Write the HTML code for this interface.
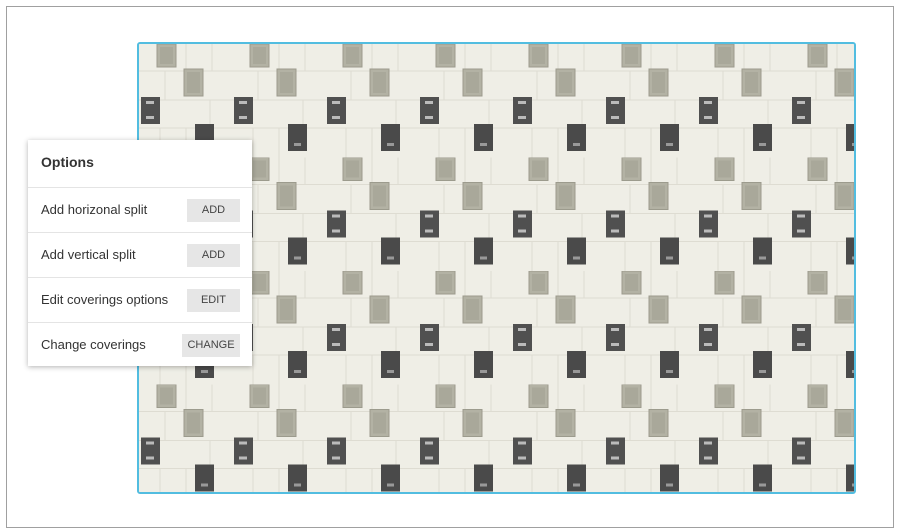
<!DOCTYPE html>
<html><head><style>
body{margin:0;width:899px;height:530px;background:#fff;position:relative;overflow:hidden;font-family:"Liberation Sans",sans-serif}
.outer{position:absolute;left:6px;top:6px;width:886px;height:520px;border:1px solid #a0a0a0}
.floor{position:absolute;left:137px;top:42px;width:715px;height:448px;border:2px solid #52bde0;border-radius:3px;overflow:hidden;background:#efeee6}
.panel{position:absolute;left:28px;top:140px;width:224px;height:226px;background:#fff;box-shadow:0 1px 5px rgba(0,0,0,.3);color:#333}
.h{height:47px;line-height:44px;padding-left:13px;font-weight:bold;font-size:14px;border-bottom:1px solid #e4e4e4}
.r{height:44px;border-bottom:1px solid #e4e4e4;position:relative;font-size:13px;line-height:44px;padding-left:13px}
.r:last-child{border:none}
.b{position:absolute;right:12px;top:11px;height:23px;line-height:23px;background:#e6e6e6;font-size:11px;text-align:center;color:#444;width:53px}
</style></head><body>
<div class="outer"></div>
<div class="floor">
<svg width="715" height="448">
<defs>
<pattern id="p" x="1" y="0" width="93" height="113.5" patternUnits="userSpaceOnUse">
<rect width="93" height="113.5" fill="#efeee6"/>
<path d="M0 27H93M0 56H93M0 84H93M46 0V27M25 27V56M70 56V84M46 84V113.5M20 84V113.5M72 0V27" stroke="#dedcd2" stroke-width="1" fill="none"/>
<rect x="17" y="0" width="19" height="23" fill="#b3b2a4" stroke="#9c9b8d"/>
<rect x="20" y="3" width="13" height="17" fill="#a9a89a"/>
<rect x="44" y="25" width="19" height="27" fill="#b3b2a4" stroke="#9c9b8d"/>
<rect x="47" y="28" width="13" height="21" fill="#a9a89a"/>
<rect x="1" y="53" width="19" height="27" fill="#505050"/>
<rect x="55" y="80" width="19" height="27" fill="#4a4a4a"/>
<rect x="6" y="57" width="8" height="3" fill="#bbb"/><rect x="6" y="72" width="8" height="3" fill="#bbb"/>
<rect x="61" y="99" width="7" height="3" fill="#999"/>
</pattern>
</defs>
<rect width="715" height="448" fill="url(#p)"/>
</svg>
</div>
<div class="panel">
<div class="h">Options</div>
<div class="r">Add horizonal split<div class="b">ADD</div></div>
<div class="r">Add vertical split<div class="b">ADD</div></div>
<div class="r">Edit coverings options<div class="b">EDIT</div></div>
<div class="r">Change coverings<div class="b" style="width:58px">CHANGE</div></div>
</div>
</body></html>
